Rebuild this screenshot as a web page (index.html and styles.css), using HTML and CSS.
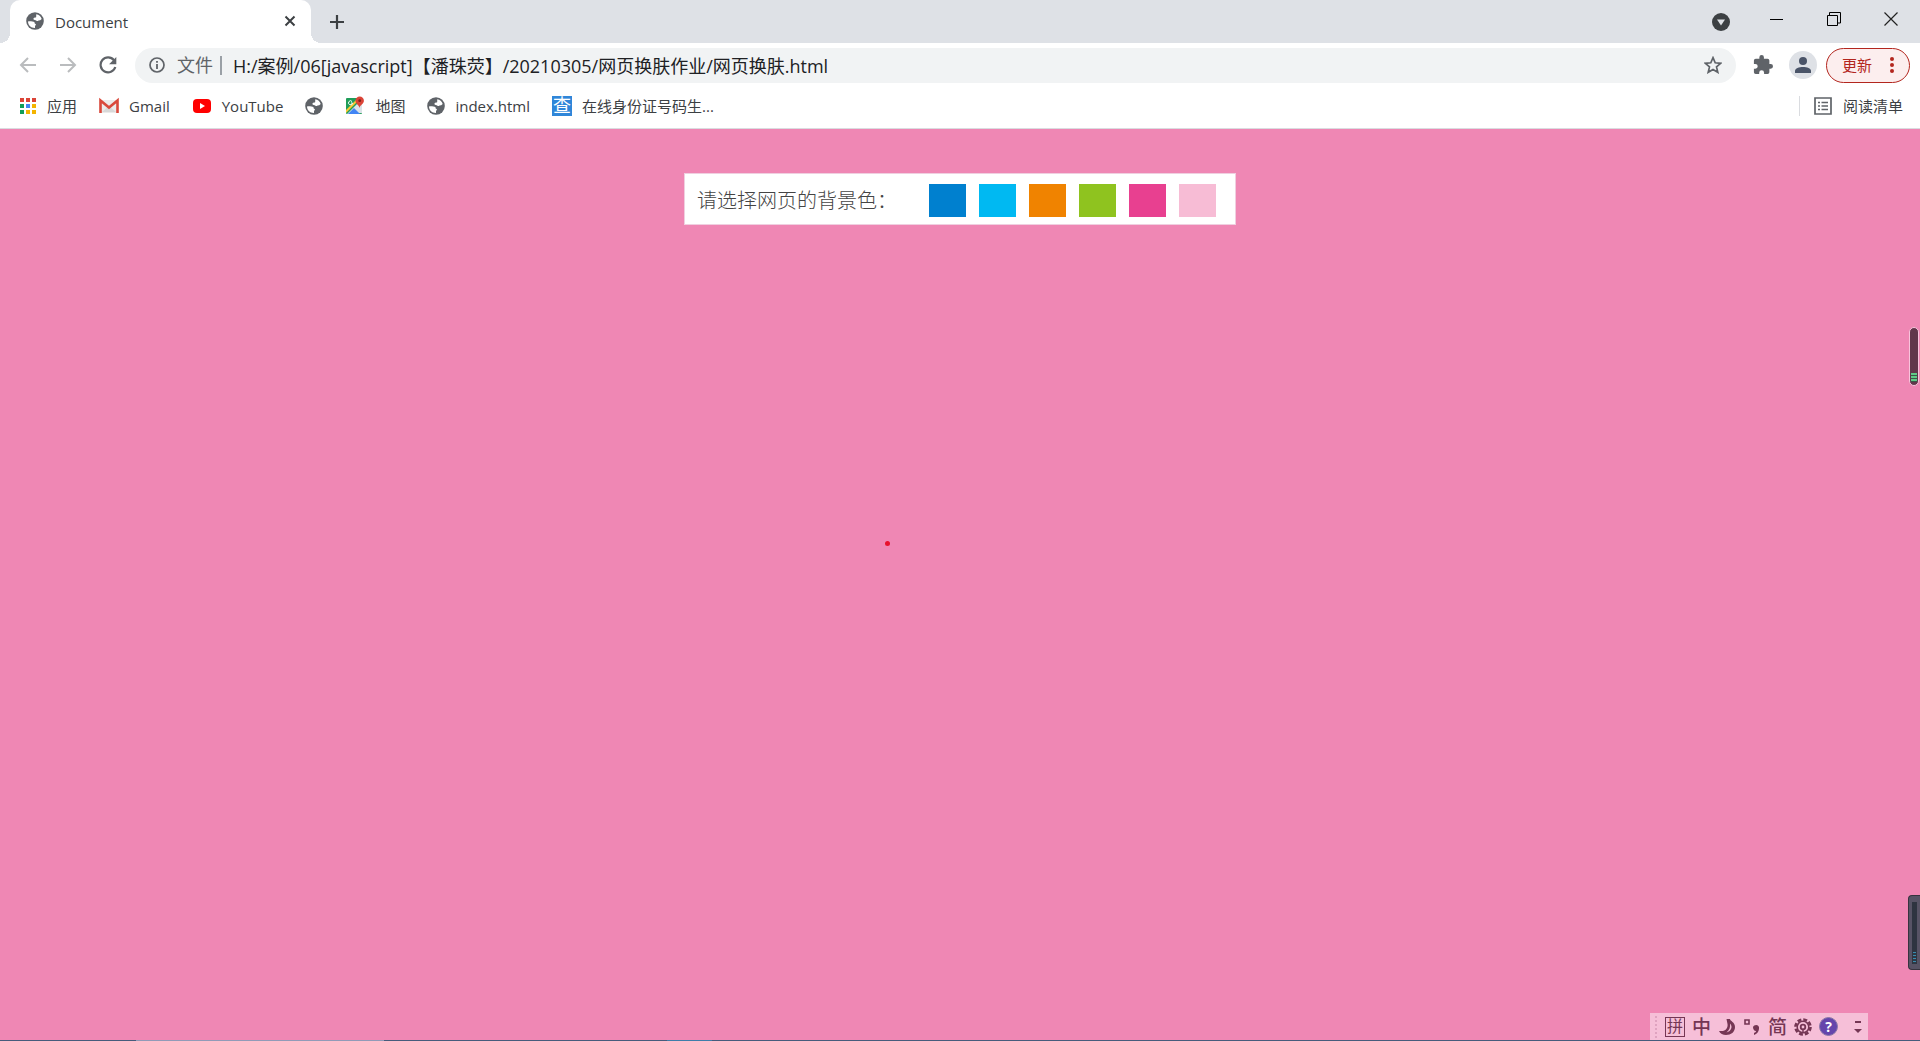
FILE: index.html
```html
<!DOCTYPE html>
<html lang="zh-CN">
<head>
<meta charset="utf-8">
<title>Document</title>
<link rel="stylesheet" href="styles.css">
</head>
<body>
<svg class="defs" aria-hidden="true">
  <symbol id="globe" viewBox="0 0 18 18">
    <circle cx="9" cy="9" r="8.8" fill="#5f6368"/>
    <path d="M2 9.6C3.500 9 5 9.500 6.400 9.500c1.800 0 2.300.8 2.300 1.700 0 .7.9.5 1.200 1.200.2.700-.9 1-.9 1.800v1.900C5 16.200 2 13.300 2 9.600z" fill="#fff"/>
    <path d="M10.200 2.200c2.700.4 4.800 2.300 5.500 4.900l-1.500 1.200-1.700.2c-.6.700-1.700.8-2.300 0-.6-.7-2.400-.2-2.700-1.300-.2-.8.6-1.400 1.400-1.600.6-.2 1.300-.2 1.300-.9z" fill="#fff"/>
  </symbol>
</svg>
<header class="browser">
  <div class="tabstrip">
    <div class="tab">
      <svg class="icon18"><use href="#globe"/></svg>
      <span class="tab-title">Document</span>
      <button class="plain" aria-label="关闭标签页"><svg width="12" height="12" viewBox="0 0 12 12"><path d="M1.500 1.500l9 9M10.500 1.500l-9 9" stroke="#3c4043" stroke-width="2"/></svg></button>
    </div>
    <button class="plain new-tab" aria-label="新标签页"><svg width="16" height="16" viewBox="0 0 16 16"><path d="M8 1v14M1 8h14" stroke="#3c4043" stroke-width="2.200"/></svg></button>
    <div class="window-controls">
      <button class="plain search-tabs" aria-label="搜索标签页"><svg width="18" height="18" viewBox="0 0 18 18"><circle cx="9" cy="9" r="9" fill="#3c4043"/><path d="M5 6.500h8L9 12.500z" fill="#dee1e6"/></svg></button>
      <button class="plain" aria-label="最小化"><svg width="14" height="14" viewBox="0 0 14 14"><path d="M0 7.500h13" stroke="#000"/></svg></button>
      <button class="plain" aria-label="还原"><svg width="14" height="14" viewBox="0 0 14 14"><path d="M.5 3.500h10v10H.5zM2.500 3V.5h11v10.500H11" fill="none" stroke="#000"/></svg></button>
      <button class="plain" aria-label="关闭"><svg width="14" height="14" viewBox="0 0 14 14"><path d="M.5.5l13 13M13.500.5l-13 13" stroke="#222" stroke-width="1.200"/></svg></button>
    </div>
  </div>

  <div class="toolbar">
    <button class="plain" aria-label="后退"><svg width="18" height="18" viewBox="0 0 18 18"><path d="M17 9H2.500M9 2L2 9l7 7" fill="none" stroke="#babcbe" stroke-width="2"/></svg></button>
    <button class="plain" aria-label="前进"><svg width="18" height="18" viewBox="0 0 18 18"><path d="M1 9h14.500M9 2l7 7-7 7" fill="none" stroke="#babcbe" stroke-width="2"/></svg></button>
    <button class="plain" aria-label="重新加载"><svg width="18" height="18" viewBox="0 0 18 18"><path d="M15 4.200A7.500 7.500 0 1 0 16.300 11" fill="none" stroke="#5f6368" stroke-width="2.200"/><path d="M17.300 1v7.200h-7.200z" fill="#5f6368"/></svg></button>
    <div class="address">
      <svg width="16" height="16" viewBox="0 0 16 16"><circle cx="8" cy="8" r="7" fill="none" stroke="#5f6368" stroke-width="1.700"/><path d="M8 7v5M8 4v1.800" stroke="#5f6368" stroke-width="1.800"/></svg>
      <label class="scheme" for="url">文件</label>
      <input class="url" id="url" type="text" value="H:/案例/06[javascript]【潘珠荧】/20210305/网页换肤作业/网页换肤.html">
      <button class="plain" aria-label="收藏"><svg width="18" height="18" viewBox="0 0 18 18"><path d="M9 1.700l2.200 5.100 5.500.5-4.200 3.600 1.300 5.400L9 13.400l-4.800 2.900 1.300-5.400-4.200-3.600 5.500-.5z" fill="none" stroke="#5f6368" stroke-width="1.700"/></svg></button>
    </div>
    <button class="plain" aria-label="扩展程序"><svg width="20" height="20" viewBox="1 1 22 22"><path fill="#5f6368" d="M20.500 11H19V7a2 2 0 0 0-2-2h-4V3.500a2.500 2.500 0 0 0-5 0V5H4a2 2 0 0 0-2 2v3.800h1.500a2.700 2.700 0 0 1 0 5.400H2V20a2 2 0 0 0 2 2h3.800v-1.500a2.700 2.700 0 0 1 5.400 0V22H17a2 2 0 0 0 2-2v-4h1.500a2.500 2.500 0 0 0 0-5z"/></svg></button>
    <button class="plain profile" aria-label="个人资料"><svg width="16" height="16" viewBox="0 0 16 16"><circle cx="8" cy="4" r="4" fill="#4a5468"/><path d="M0 16v-2c0-2.700 4-4 8-4s8 1.300 8 4v2z" fill="#4a5468"/></svg></button>
    <button class="update">更新<svg width="4" height="16" viewBox="0 0 4 16"><circle cx="2" cy="2" r="2" fill="#b3261e"/><circle cx="2" cy="8" r="2" fill="#b3261e"/><circle cx="2" cy="14" r="2" fill="#b3261e"/></svg></button>
  </div>

  <nav class="bookmarks">
    <a href="#"><svg class="icon18" viewBox="0 0 18 18"><path fill="#db4437" d="M1 1h4v4H1zM7 1h4v4H7zM13 1h4v4h-4z"/><path fill="#0f9d58" d="M1 7h4v4H1zM1 13h4v4H1z"/><path fill="#4285f4" d="M7 7h4v4H7z"/><path fill="#f4b400" d="M13 7h4v4h-4zM7 13h4v4H7zM13 13h4v4h-4z"/></svg>应用</a>
    <a href="#"><svg class="icon20" viewBox="0 0 20 20"><path d="M2 4h16v13H2z" fill="#eceaea"/><path d="M3 16l7-6 7 6z" fill="#d8d8d8"/><path d="M1.500 17V4.500L10 11.500l8.500-7V17" fill="none" stroke="#d9483b" stroke-width="2.600"/></svg>Gmail</a>
    <a href="#"><svg class="icon20" viewBox="0 0 20 20"><rect x="1" y="3" width="18" height="14" rx="4" fill="#f00"/><path d="M8 7l5 3-5 3z" fill="#fff"/></svg>YouTube</a>
    <a href="#" aria-label="书签"><svg class="icon18"><use href="#globe"/></svg></a>
    <a href="#"><svg class="icon20" viewBox="0 0 20 20"><rect x="1" y="2" width="16" height="16" rx="1" fill="#1f9d58"/><path d="M2 18L15 5l2 1v11z" fill="#dce3e8"/><path d="M3 18l6-6 6 6z" fill="#4285f4"/><path d="M1 14L13 2h3L1 17z" fill="#fbc934"/><path d="M14.500 12c-.3-3-4-4-4-7.300a4.200 4.200 0 0 1 8.400 0C18.900 8 14.900 9 14.500 12z" fill="#db4437"/><circle cx="14.700" cy="4.700" r="1.400" fill="#7b231b"/><path d="M7 5.500A2 2 0 1 0 7.500 7H6" fill="none" stroke="#fff"/></svg>地图</a>
    <a href="#"><svg class="icon18"><use href="#globe"/></svg>index.html</a>
    <a href="#"><span class="cha">查</span>在线身份证号码生...</a>
    <button class="plain reading"><svg width="18" height="18" viewBox="0 0 18 18"><path d="M1 1h16v16H1z" fill="none" stroke="#5f6368" stroke-width="1.700"/><path d="M4 5.500h2M4 9h2M4 12.500h2M7.500 5.500H14M7.500 9H14M7.500 12.500H14" stroke="#5f6368" stroke-width="1.500"/></svg>阅读清单</button>
  </nav>
</header>

<main class="page">
  <section class="picker">
    <span>请选择网页的背景色：</span>
    <div class="swatches">
      <button class="swatch blue" aria-label="蓝色"></button>
      <button class="swatch sky" aria-label="天蓝色"></button>
      <button class="swatch orange" aria-label="橙色"></button>
      <button class="swatch green" aria-label="绿色"></button>
      <button class="swatch rose" aria-label="玫红色"></button>
      <button class="swatch pink" aria-label="粉色"></button>
    </div>
  </section>
</main>

<i class="pointer"></i>
<div class="meter"><i></i></div>
<div class="gauge"><i></i></div>
<div class="taskbar"><i class="light"></i><i class="active"></i></div>
<div class="ime">
  <i class="grip"></i>
  <span class="boxed">拼</span>
  <span>中</span>
  <svg width="18" height="18" viewBox="0 0 18 18"><path d="M8.500 1H12c0 2 5 3 5 8 0 5-4 8-9 8-3 0-6-1.500-7-4h4c3.500-1 5-4 4.500-7z" fill="#753654"/><path d="M12 5.500c3 3 1.500 7.500-3.500 9C11.500 12 12.500 9 12 5.500z" fill="#f6bfd8"/></svg>
  <svg width="18" height="18" viewBox="0 0 18 18"><path d="M2 2h4v4H2z" fill="none" stroke="#753654" stroke-width="1.600"/><path d="M10 9c1-3 7-3 6 2-.4 3-2 5-5 6v-2c1-.6 2-1 2-2-2 0-3-2-3-4z" fill="#753654"/></svg>
  <span>简</span>
  <svg width="18" height="18" viewBox="0 0 18 18"><circle cx="9" cy="9" r="7.500" fill="none" stroke="#753654" stroke-width="2.600" stroke-dasharray="3.900 2"/><circle cx="9" cy="9" r="5.800" fill="none" stroke="#753654" stroke-width="1.500"/><circle cx="9" cy="9" r="2.300" fill="none" stroke="#753654" stroke-width="1.800"/><path d="M9 11v4" stroke="#753654" stroke-width="1.500"/></svg>
  <span class="help">?</span>
  <svg class="more" width="8" height="14" viewBox="0 0 8 14"><path d="M1 2h6" stroke="#753654" stroke-width="2"/><path d="M0 9h8l-4 4z" fill="#753654"/></svg>
</div>
</body>
</html>
```
FILE: styles.css
```css
* { box-sizing: border-box; }

body {
  margin: 0;
  min-height: 100vh;
  display: flex;
  flex-direction: column;
  background: #ef87b4;
  color: #3c4043;
  font: 15px/20px "Open Sans", "Noto Sans CJK SC", sans-serif;
}

svg { display: block; flex: none; }
.defs { position: absolute; width: 0; height: 0; }
.icon18 { width: 18px; height: 18px; }
.icon20 { width: 20px; height: 20px; }

button { font: inherit; color: inherit; cursor: pointer; }
.plain {
  display: flex;
  align-items: center;
  flex: none;
  padding: 0;
  border: 0;
  background: none;
}

.browser { background: #fff; border-bottom: 1px solid #dadce0; }

.tabstrip {
  display: flex;
  align-items: center;
  height: 43px;
  background: #dee1e6;
}
.tab {
  position: relative;
  display: flex;
  align-items: center;
  gap: 11px;
  width: 301px;
  height: 43px;
  margin-left: 10px;
  padding: 0 15px 2px 16px;
  border-radius: 10px 10px 0 0;
  background: #fff;
}
.tab::before,
.tab::after {
  content: "";
  position: absolute;
  bottom: 0;
  width: 10px;
  height: 10px;
}
.tab::before { right: 100%; background: radial-gradient(circle at 0 0, #dee1e6 10px, #fff 10px); }
.tab::after { left: 100%; background: radial-gradient(circle at 100% 0, #dee1e6 10px, #fff 10px); }
.tab-title { flex: 1; padding-top: 2px; }
.new-tab { margin-left: 18px; }
.window-controls {
  display: flex;
  align-items: center;
  gap: 43px;
  margin-left: auto;
  padding: 0 22px 6px 0;
}
.search-tabs { margin: 6px -3px 0 0; }

.toolbar {
  display: flex;
  align-items: center;
  gap: 22px;
  height: 45px;
  padding: 0 10px 1px 19px;
}
.address {
  display: flex;
  align-items: center;
  flex: 1;
  min-width: 0;
  height: 35px;
  margin: 0 -5px 0 -4px;
  padding: 0 14px;
  border-radius: 18px;
  background: #f1f3f4;
  font-size: 18px;
}
.scheme {
  margin-left: 12px;
  padding-right: 7px;
  border-right: 2px solid #9aa0a6;
  color: #5f6368;
  line-height: 19px;
}
.url {
  flex: 1;
  min-width: 0;
  height: 30px;
  padding: 0 0 1px 11px;
  border: 0;
  background: none;
  color: #202124;
  font: inherit;
  outline: 0;
}
.profile {
  justify-content: center;
  width: 28px;
  height: 28px;
  margin: 0 -13px 0 -6px;
  border-radius: 50%;
  background: #dee1e6;
}
.update {
  display: flex;
  align-items: center;
  justify-content: space-between;
  flex: none;
  width: 84px;
  height: 35px;
  padding: 0 15px;
  border: 1px solid #b3261e;
  border-radius: 18px;
  background: #fceeee;
  color: #b3261e;
}

.bookmarks {
  display: flex;
  align-items: center;
  gap: 22px;
  height: 40px;
  padding: 0 17px 4px 19px;
}
.bookmarks a {
  display: flex;
  align-items: center;
  gap: 10px;
  color: inherit;
  text-decoration: none;
}
.cha {
  width: 20px;
  height: 20px;
  background: #2f86d9;
  color: #fff;
  font-size: 18px;
  line-height: 19px;
  text-align: center;
}
.reading {
  gap: 11px;
  height: 20px;
  margin-left: auto;
  padding-left: 14px;
  border-left: 1px solid #dadce0;
}

.page { flex: 1; padding: 44px 20px; }
.picker {
  display: flex;
  align-items: center;
  justify-content: space-between;
  max-width: 552px;
  height: 52px;
  margin: 0 auto;
  padding: 3px 19px 0 12px;
  border: 1px solid #f0cfe0;
  background: #fff;
  color: #444;
  font-size: 20px;
  font-weight: 300;
}
.swatches { display: flex; gap: 13px; }
.swatch { width: 37px; height: 33px; padding: 0; border: 0; }
.blue { background: #0080cf; }
.sky { background: #00b9f2; }
.orange { background: #f08300; }
.green { background: #8fc31f; }
.rose { background: #e84090; }
.pink { background: #f7bcd5; }

/* Desktop overlays floating above the browser window */
.pointer {
  position: fixed;
  left: 885px;
  top: 541px;
  width: 5px;
  height: 5px;
  border-radius: 50%;
  background: #e8112d;
}
.meter {
  position: fixed;
  right: 1px;
  top: 327px;
  width: 10px;
  height: 59px;
  border: 1px solid #f9c4dc;
  border-radius: 5px;
  background: #61364b;
}
.meter i {
  display: block;
  height: 9px;
  margin: 45px 1px 0;
  background: repeating-linear-gradient(#5fc987 0 2px, #3c5548 2px 3px);
}
.gauge {
  position: fixed;
  right: 0;
  top: 895px;
  width: 12px;
  height: 75px;
  padding: 6px 3px;
  border: 1px solid #37333f;
  border-right: 0;
  border-radius: 4px 0 0 4px;
  background: #575365;
}
.gauge i {
  display: block;
  height: 62px;
  padding: 0 1px;
  background:
    repeating-linear-gradient(#398bb0 0 1px, #2e3945 1px 3px) 1px 100% / 3px 12px no-repeat,
    #2e3440;
}
.taskbar {
  position: fixed;
  left: 0;
  right: 0;
  bottom: 0;
  height: 1px;
  display: flex;
  gap: 283px;
  padding-left: 136px;
  background: #465c7c;
}
.taskbar .light { width: 248px; background: #919bb8; }
.taskbar .active { width: 45px; background: #3f7eaa; }

.ime {
  position: fixed;
  right: 52px;
  bottom: 1px;
  display: flex;
  align-items: center;
  gap: 7px;
  width: 218px;
  height: 27px;
  padding: 0 6px 0 5px;
  background: #f6bfd8;
  color: #753654;
  font-size: 19px;
  font-weight: 500;
}
.grip { height: 22px; margin-right: 1px; border-left: 2px dotted #dfa3c0; }
.boxed {
  width: 20px;
  height: 20px;
  border: 1px solid #753654;
  font-size: 16px;
  font-weight: 400;
  line-height: 17px;
  text-align: center;
}
.help {
  width: 19px;
  height: 19px;
  border: 1px solid #8a78a8;
  border-radius: 50%;
  background: #6545ac;
  color: #fff;
  font-size: 14px;
  font-weight: 700;
  line-height: 17px;
  text-align: center;
}
.more { margin-left: auto; }
```
